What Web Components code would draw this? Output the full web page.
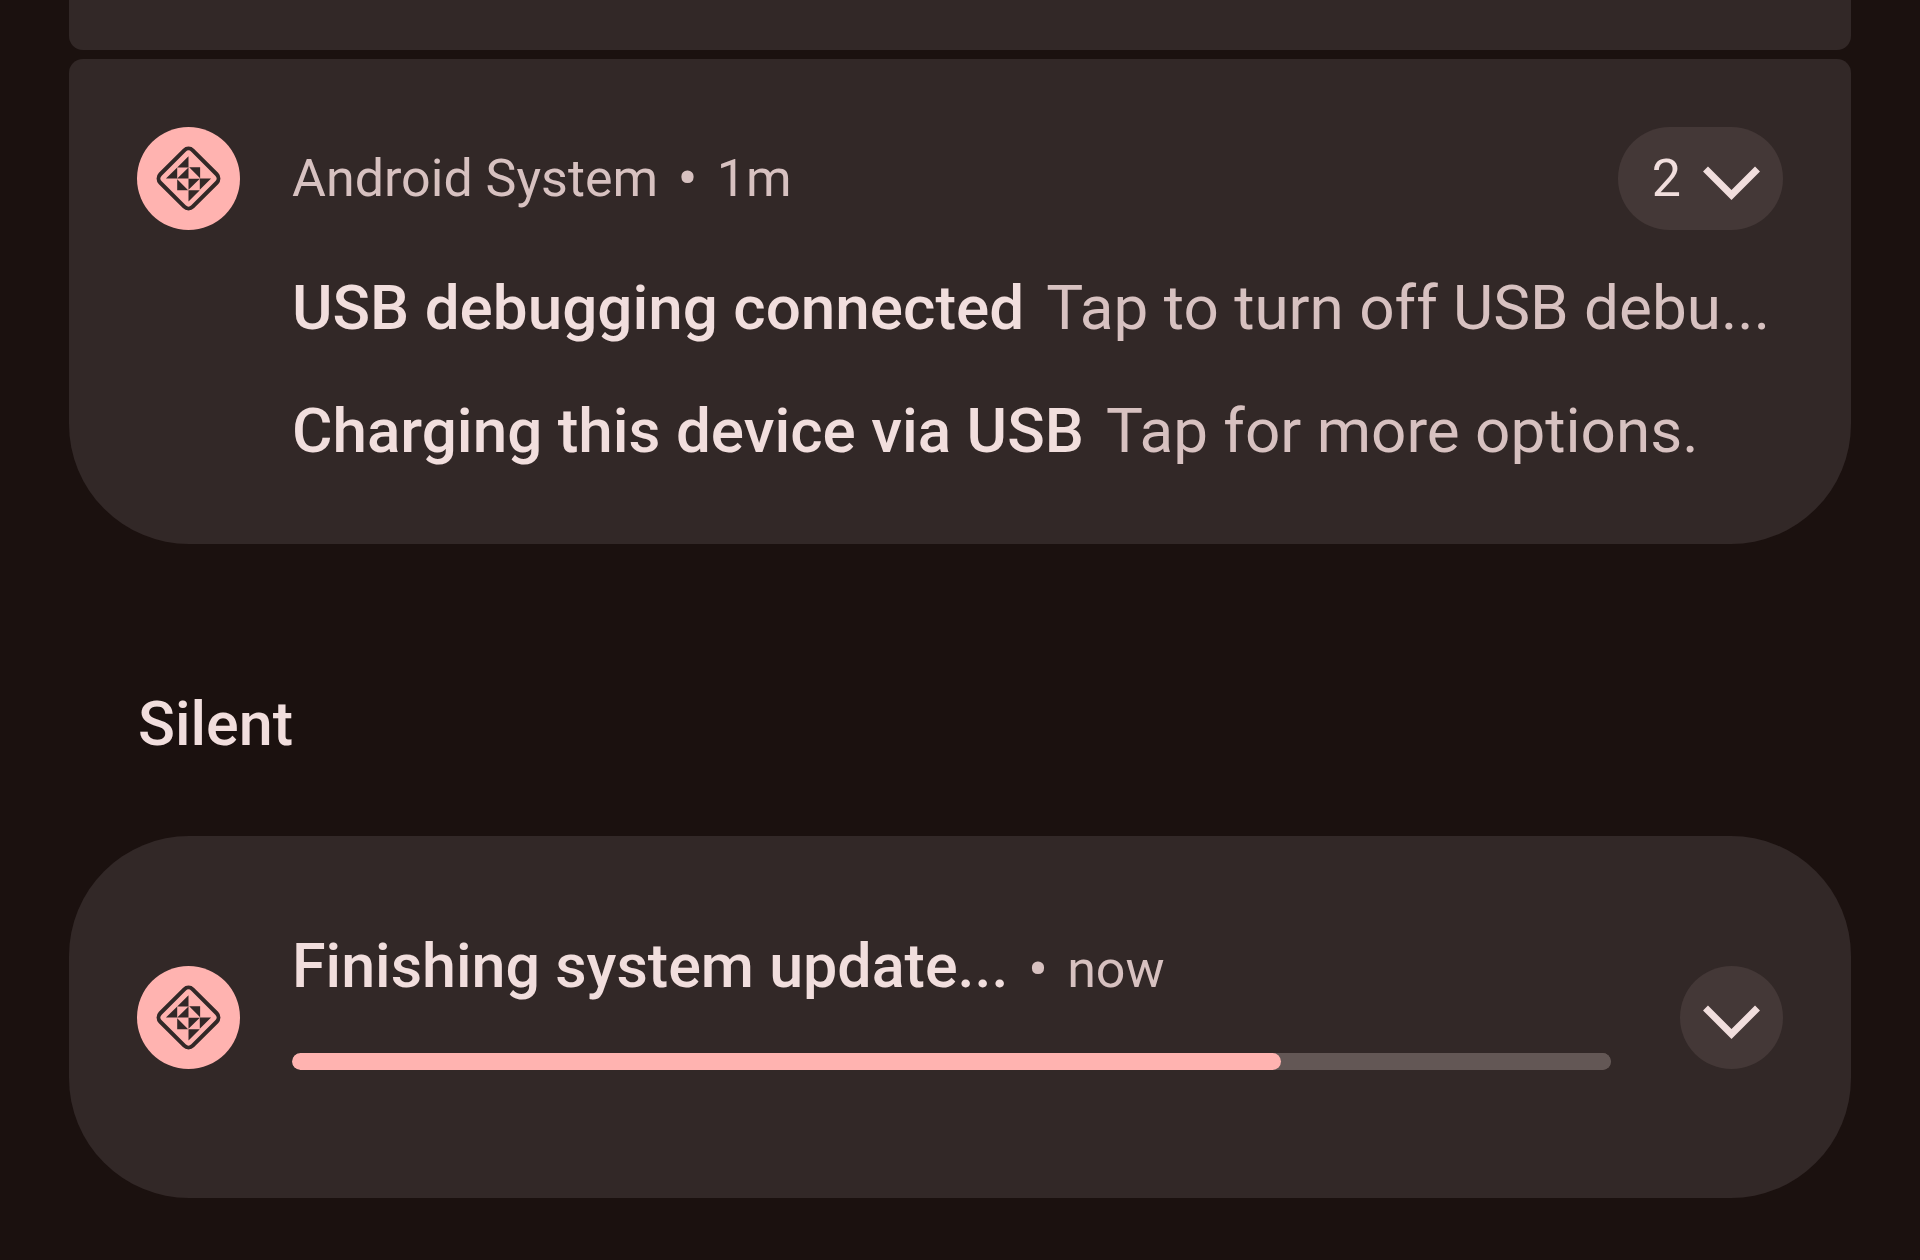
<!DOCTYPE html>
<html lang="en">
<head>
<meta charset="utf-8">
<title>Notifications</title>
<style>
  html { background: #1b110f; }
  body { margin: 0; font-family: Roboto, "Noto Sans", sans-serif; }
</style>
</head>
<body>
<notification-shade>
  <notification-card shape="tail"></notification-card>
  <notification-card shape="last">
    <notification-group app="Android System" time="1m" count="2">
      <notification-line heading="USB debugging connected">Tap to turn off USB debu...</notification-line>
      <notification-line heading="Charging this device via USB">Tap for more options.</notification-line>
    </notification-group>
  </notification-card>
  <section-title>Silent</section-title>
  <notification-card>
    <notification-progress time="now" value="75">Finishing system update...</notification-progress>
  </notification-card>
</notification-shade>

<script>
  const define = (name, html, setup) => {
    const template = document.createElement('template');
    template.innerHTML = html;
    customElements.define(name, class extends HTMLElement {
      constructor() {
        super();
        this.attachShadow({ mode: 'open' }).append(template.content.cloneNode(true));
      }
      connectedCallback() {
        if (setup) setup(this, selector => this.shadowRoot.querySelector(selector));
      }
    });
  };

  define('notification-shade', `
    <style>
      :host {
        --card: #322827; --pill: #443837; --accent: #ffb3b0;
        --text: #f1dedd; --muted: #d7c1c0; --track: #635755;
        display: block; box-sizing: border-box; min-height: 100vh;
        padding: 0 69px 60px; color: var(--text);
      }
    </style>
    <main><slot></slot></main>`);

  define('notification-card', `
    <style>
      :host { display: block; background: var(--card); border-radius: 120px; }
      :host([shape=tail]) { height: 50px; border-radius: 0 0 14px 14px; margin-bottom: 9px; }
      :host([shape=last]) { border-radius: 14px 14px 120px 120px; }
    </style>
    <slot></slot>`);

  define('app-icon', `
    <style>
      :host { display: block; flex: none; width: 103px; height: 103px; }
      svg { display: block; width: 100%; height: 100%; }
    </style>
    <svg viewBox="-155 -155 310 310" aria-hidden="true">
      <circle r="155" fill="var(--accent)"/>
      <rect x="-69" y="-69" width="138" height="138" rx="18" transform="rotate(45)" fill="none" stroke="var(--card)" stroke-width="12"/>
      <path fill="var(--card)" d="M0-67V-33H-34zM-34-33V0H-68zM0-33V0H-34zM2-34H35V-1zM-34 2V35H-1zM0 1H34L0 34zM34 0H68L34 34zM0 35H34L0 69z"/>
    </svg>`);

  define('expand-button', `
    <style>
      :host { display: block; flex: none; }
      button {
        display: flex; align-items: center; gap: 22px;
        box-sizing: border-box; min-width: 103px; height: 103px; padding: 0 23px 0 34px;
        border: 0; border-radius: 52px; background: var(--pill); color: var(--text);
        font: 400 52px/60px Roboto, sans-serif; cursor: pointer;
      }
      :host([plain]) button { padding: 0 23px; gap: 0; }
      svg { display: block; width: 57px; height: 34px; margin-top: 9px; }
    </style>
    <button type="button" aria-label="Expand"><slot></slot>
      <svg viewBox="0 0 57 34" aria-hidden="true"><path d="M2.500 3L28.500 29L54.500 3" fill="none" stroke="currentColor" stroke-width="7"/></svg>
    </button>`);

  define('notification-group', `
    <style>
      :host { display: grid; grid-template-columns: 103px 1fr; column-gap: 52px; padding: 68px 68px 77px; }
      header { display: flex; align-items: center; justify-content: space-between; }
      p { display: flex; gap: 20px; margin: 0; font-size: 52px; line-height: 60px; color: var(--muted); }
      .dot { font-weight: 700; }
      .lines { grid-column: 2; display: flex; flex-direction: column; gap: 51px; margin-top: 42px; min-width: 0; }
    </style>
    <app-icon></app-icon>
    <header>
      <p><span class="app"></span><span class="dot">•</span><span class="time"></span></p>
      <expand-button><span class="count"></span></expand-button>
    </header>
    <div class="lines"><slot></slot></div>`, (host, $) => {
      for (const field of ['app', 'time', 'count']) {
        $('.' + field).textContent = host.getAttribute(field);
      }
    });

  define('notification-line', `
    <style>
      :host { display: flex; gap: 22px; font-size: 62px; line-height: 72px; white-space: nowrap; }
      strong { font-weight: 500; }
      span { color: var(--muted); }
    </style>
    <strong></strong><span><slot></slot></span>`, (host, $) => {
      $('strong').textContent = host.getAttribute('heading');
    });

  define('section-title', `
    <style>
      :host { display: block; padding: 144px 69px 76px; }
      h2 { margin: 0; font-size: 61px; line-height: 72px; font-weight: 500; }
    </style>
    <h2><slot></slot></h2>`);

  define('notification-progress', `
    <style>
      :host { display: flex; align-items: center; padding: 94px 68px; }
      .body { flex: 1; min-width: 0; margin: 0 69px 0 52px; padding-bottom: 34px; }
      .row { display: flex; align-items: baseline; gap: 20px; line-height: 72px; margin-bottom: 47px; font-size: 52px; color: var(--muted); }
      .dot { font-weight: 700; }
      h3 { margin: 0; font-size: 61px; font-weight: 500; color: var(--text); }
      progress {
        display: block; width: 100%; height: 17px; border: 0; border-radius: 9px;
        appearance: none; overflow: hidden; background: var(--track);
      }
      progress::-webkit-progress-bar { background: var(--track); border-radius: 9px; }
      progress::-webkit-progress-value { background: var(--accent); border-radius: 9px; }
    </style>
    <app-icon></app-icon>
    <div class="body">
      <div class="row"><h3 id="title"><slot></slot></h3><span class="dot">•</span><span class="time"></span></div>
      <progress max="100" aria-labelledby="title"></progress>
    </div>
    <expand-button plain></expand-button>`, (host, $) => {
      $('.time').textContent = host.getAttribute('time');
      $('progress').value = Number(host.getAttribute('value'));
    });
</script>
</body>
</html>
